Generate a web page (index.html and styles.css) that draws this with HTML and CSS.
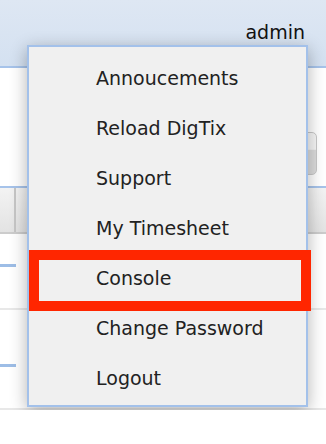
FILE: index.html
```html
<!DOCTYPE html>
<html lang="en">
<head>
    <meta charset="UTF-8">
    <title>DigTix</title>
    <link rel="stylesheet" href="styles.css">
</head>
<body>
    <div class="top">
        <span class="user">admin</span>
    </div>
    <div class="filter">
        <div class="field"></div>
    </div>
    <div class="toolbar">
        <div class="cell first"></div>
        <div class="cell"></div>
    </div>
    <div class="row row1"><div class="mark"></div></div>
    <div class="row row2"><div class="mark"></div></div>

    <!-- user menu -->
    <ul class="menu">
        <li>Annoucements</li>
        <li>Reload DigTix</li>
        <li>Support</li>
        <li>My Timesheet</li>
        <li>Console</li>
        <li>Change Password</li>
        <li>Logout</li>
    </ul>
    <div class="hilite"></div>
</body>
</html>
```

FILE: styles.css
```css
body {
    margin: 0;
    font-family: "DejaVu Sans", Verdana, sans-serif;
    background: #fff;
    position: relative;
    overflow: hidden;
}
.top {
    height: 66px;
    background: linear-gradient(#dee7f3, #d4e1f1);
    border-bottom: 2px solid #a6c3ea;
    display: flex;
    justify-content: flex-end;
    align-items: flex-end;
    padding-right: 21px;
}
.user {
    font-size: 19px;
    color: #111;
    line-height: 26px;
    margin-bottom: 21px;
}
.filter {
    height: 118px;
    display: flex;
    justify-content: flex-end;
    align-items: flex-start;
}
.field {
    width: 60px;
    height: 41px;
    margin-top: 64px;
    margin-right: 9px;
    border: 1px solid #c8c8c8;
    border-radius: 5px;
    background: linear-gradient(#f6f6f6 40%, #dcdcdc 41%);
}
.toolbar {
    height: 44px;
    border-top: 2px solid #a6c3ea;
    border-bottom: 2px solid #cccccc;
    background: linear-gradient(#f3f3f3, #e3e3e3);
    display: flex;
}
.cell {
    flex: 1;
}
.cell.first {
    flex: none;
    width: 14px;
    border-right: 2px solid #c6c6c6;
}
.row {
    border-bottom: 2px solid #e8e8e8;
}
.row1 {
    height: 76px;
    padding-top: 30px;
    box-sizing: border-box;
}
.row2 {
    height: 100px;
    padding-top: 54px;
    box-sizing: border-box;
}
.mark {
    width: 16px;
    height: 3px;
    background: #9dbde6;
}
.menu {
    position: absolute;
    left: 27px;
    top: 45px;
    width: 277px;
    margin: 0;
    padding: 6px 0 2px;
    list-style: none;
    background: #f0f0f0;
    border: 2px solid #a3c1ea;
    box-shadow: 0 4px 16px rgba(0, 0, 0, 0.3);
}
.menu li {
    height: 50px;
    line-height: 50px;
    padding-left: 67px;
    font-size: 19px;
    color: #222;
}
.hilite {
    position: absolute;
    left: 29px;
    top: 250px;
    width: 282px;
    height: 61px;
    box-sizing: border-box;
    border: 10px solid #ff2600;
}
```
